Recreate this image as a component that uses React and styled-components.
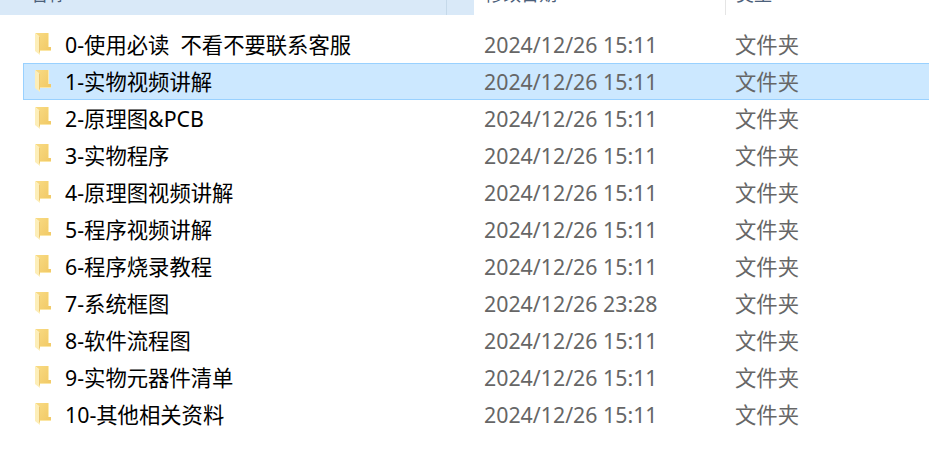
import React from "react";
import styled, { createGlobalStyle } from "styled-components";

const files = [
  { name: "0-使用必读  不看不要联系客服", date: "2024/12/26 15:11" },
  { name: "1-实物视频讲解", date: "2024/12/26 15:11", selected: true },
  { name: "2-原理图&PCB", date: "2024/12/26 15:11" },
  { name: "3-实物程序", date: "2024/12/26 15:11" },
  { name: "4-原理图视频讲解", date: "2024/12/26 15:11" },
  { name: "5-程序视频讲解", date: "2024/12/26 15:11" },
  { name: "6-程序烧录教程", date: "2024/12/26 15:11" },
  { name: "7-系统框图", date: "2024/12/26 23:28" },
  { name: "8-软件流程图", date: "2024/12/26 15:11" },
  { name: "9-实物元器件清单", date: "2024/12/26 15:11" },
  { name: "10-其他相关资料", date: "2024/12/26 15:11" },
];

const FolderIcon = ({ id }) => (
  <svg width="18" height="24" viewBox="0 0 18 24">
    <defs>
      <linearGradient id={id} x1="0" y1="0" x2="1" y2="0.7">
        <stop offset="0" stopColor="#f9dc85" />
        <stop offset="1" stopColor="#f2cb69" />
      </linearGradient>
    </defs>
    <path d="M1 1H14V15H17V18H6V5Z" fill={`url(#${id})`} />
    <path d="M14 1H15V15H14Z" fill="#fcebb0" />
    <path d="M1 1L6 5V23L1 19Z" fill="#fdeeb8" />
    <path d="M5 4L6 5V21L5 20Z" fill="#ecc873" />
    <path d="M6 18H17V19H6Z" fill="#fbe6a4" />
  </svg>
);

export default function App() {
  return (
    <>
      <GlobalStyle />
      <Window>
        <Header>
          <NameHead>
            <HeadLabel>名称</HeadLabel>
          </NameHead>
          <SortSlot />
          <DateHead>
            <HeadLabel>修改日期</HeadLabel>
          </DateHead>
          <TypeHead>
            <HeadLabel>类型</HeadLabel>
          </TypeHead>
        </Header>
        <List>
          {files.map((file, i) => (
            <Row key={file.name} $selected={file.selected}>
              <IconCell>
                <FolderIcon id={`folder-${i}`} />
              </IconCell>
              <Name>{file.name}</Name>
              <Meta>{file.date}</Meta>
              <Kind>文件夹</Kind>
            </Row>
          ))}
        </List>
      </Window>
    </>
  );
}

const GlobalStyle = createGlobalStyle`
  html, body {
    margin: 0;
    padding: 0;
    background: #fff;
  }
`;

const Window = styled.div`
  width: 929px;
  height: 466px;
  overflow: hidden;
  background: #fff;
  font-family: "Noto Sans", "Noto Sans CJK SC", sans-serif;
`;

const Header = styled.div`
  display: flex;
  height: 15px;
  overflow: hidden;
`;

const NameHead = styled.div`
  width: 446px;
  padding-left: 30px;
  background: #d9e9f8;
  box-sizing: border-box;
`;

const SortSlot = styled.div`
  width: 28px;
  background: #d9e9f8;
  border-left: 1px solid #c5d9ea;
  box-sizing: border-box;
`;

const DateHead = styled.div`
  width: 252px;
  padding-left: 11px;
  border-right: 1px solid #e5e5e5;
  box-sizing: border-box;
`;

const TypeHead = styled.div`
  padding-left: 10px;
`;

const HeadLabel = styled.div`
  margin-top: -18px;
  font-size: 18px;
  line-height: 24px;
  color: #4c607a;
`;

const List = styled.div`
  padding-top: 11px;
`;

const Row = styled.div`
  display: flex;
  align-items: center;
  box-sizing: border-box;
  width: 920px;
  height: 37px;
  margin-left: 23px;
  background: ${({ $selected }) => ($selected ? "#cce8ff" : "transparent")};
  border: 1px solid ${({ $selected }) => ($selected ? "#99d1ff" : "transparent")};
`;

const IconCell = styled.div`
  display: flex;
  width: 41px;
  padding-left: 10px;
  box-sizing: border-box;
  margin-top: -1px;
`;

const Name = styled.div`
  width: 419px;
  font-size: 21.33px;
  line-height: 30px;
  color: #000;
  white-space: pre;
`;

const Meta = styled.div`
  width: 251px;
  font-size: 21.33px;
  line-height: 30px;
  color: #666;
`;

const Kind = styled.div`
  font-size: 21.33px;
  line-height: 30px;
  color: #666;
`;
